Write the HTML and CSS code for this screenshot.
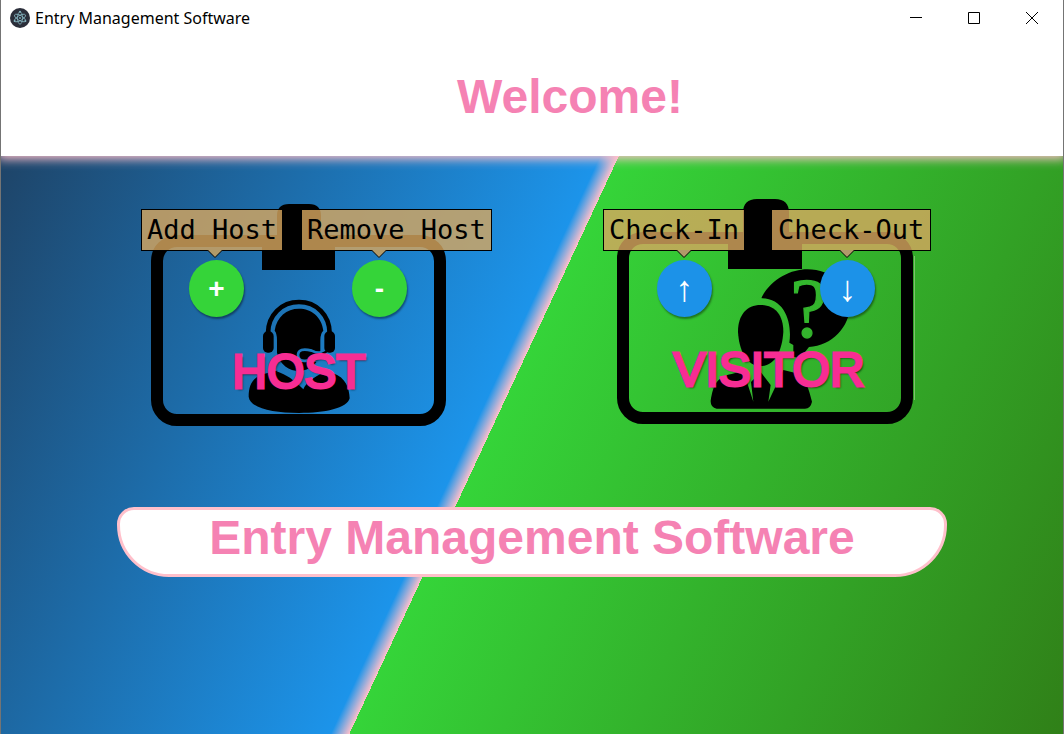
FILE: index.html
```html
<!DOCTYPE html>
<html lang="en">
<head>
<meta charset="utf-8">
<title>Entry Management Software</title>
<link rel="stylesheet" href="styles.css">
</head>
<body>
<div class="window">
  <div class="titlebar">
    <svg class="app-icon" viewBox="0 0 20 20" aria-hidden="true">
      <circle cx="10" cy="10" r="10" fill="#2b2e3a"/>
      <g fill="none" stroke="#84b4bf" stroke-width=".8">
        <ellipse cx="10" cy="10" rx="6.2" ry="2.5" transform="rotate(30 10 10)"/>
        <ellipse cx="10" cy="10" rx="6.2" ry="2.5" transform="rotate(-30 10 10)"/>
        <ellipse cx="10" cy="10" rx="6.2" ry="2.5" transform="rotate(90 10 10)"/>
      </g>
      <g fill="#84b4bf"><circle cx="10" cy="10" r=".9"/><circle cx="4.6" cy="13" r="1"/><circle cx="15.4" cy="13" r="1"/><circle cx="10" cy="3.8" r="1"/></g>
    </svg>
    <span class="app-name">Entry Management Software</span>
    <button class="win-btn" aria-label="Minimize"><svg viewBox="0 0 12 12"><path d="M0 5.5H12"/></svg></button>
    <button class="win-btn" aria-label="Maximize"><svg viewBox="0 0 12 12"><path d="M.5 .5H11.5V11.5H.5Z"/></svg></button>
    <button class="win-btn" aria-label="Close"><svg viewBox="0 0 12 12"><path d="M0 0L12 12M12 0L0 12"/></svg></button>
  </div>
  <header class="header"><h1 class="heading">Welcome!</h1></header>
  <main class="main">
    <div class="cards">
      <section class="card">
        <svg class="badge" viewBox="139 190 320 250" aria-hidden="true">
          <defs>
            <mask id="host-cut" maskUnits="userSpaceOnUse" x="0" y="0" width="960" height="450">
              <rect width="960" height="450" fill="#fff"/>
              <path d="M410 244C440 255 460 268 490 298C500 275 525 262 545 250L520 228L477 246L430 222Z" fill="#000"/>
            </mask>
            <mask id="host-head" maskUnits="userSpaceOnUse" x="0" y="0" width="960" height="450">
              <rect width="960" height="450" fill="#fff"/>
              <path d="M560 180Q540 195 515 182Q475 172 474 195Q475 216 500 212H550" fill="none" stroke="#000" stroke-width="8"/>
            </mask>
          </defs>
          <rect x="157" y="241" width="283" height="179" rx="20" fill="none" stroke="#000" stroke-width="12"/>
          <path d="M262 270V236H277V216Q277 204 289 204H309Q321 204 321 216V236H335V270Z"/>
          <g transform="translate(140 290) scale(.33333)">
            <path d="M384 130C384 75 425 36 477 36S569 75 569 130" fill="none" stroke="#000" stroke-width="14"/>
            <rect x="369" y="124" width="32" height="64" rx="14"/>
            <rect x="553" y="124" width="32" height="64" rx="14"/>
            <path d="M326 320C326 285 338 258 380 250L420 240H535L580 250C617 263 628 295 629 325C622 355 555 369 477 369S330 355 326 320Z" mask="url(#host-cut)"/>
            <path d="M411 188V150Q411 130 404 122C410 80 440 56 477 56S545 80 550 122Q541 130 541 150V190C535 222 505 243 477 243S418 224 411 188Z" mask="url(#host-head)"/>
            <path d="M560 184Q540 198 520 194" fill="none" stroke="#000" stroke-width="7"/>
          </g>
        </svg>
        <div class="content">
          <div class="actions">
            <button class="round green">+<span class="tip add">Add Host<svg class="arrow" viewBox="0 0 16 9"><path d="M.5 0L8 7.5L15.5 0"/></svg></span></button>
            <button class="round green">-<span class="tip remove">Remove Host<svg class="arrow" viewBox="0 0 16 9"><path d="M.5 0L8 7.5L15.5 0"/></svg></span></button>
          </div>
          <h2 class="card-title">HOST</h2>
        </div>
      </section>
      <section class="card">
        <svg class="badge" viewBox="605 190 320 250" aria-hidden="true">
          <defs>
            <mask id="question-cut" maskUnits="userSpaceOnUse" x="300" y="-100" width="500" height="450">
              <rect x="300" y="-100" width="500" height="450" fill="#fff"/>
              <text class="question" x="556" y="142">?</text>
            </mask>
          </defs>
          <rect x="623" y="238" width="284" height="180" rx="20" fill="none" stroke="#000" stroke-width="12"/>
          <path d="M914.5 256V400" stroke="#7fc06f"/>
          <path d="M728 269V233H743V213Q743 199 757 199H775Q789 199 789 213V233H802V269Z"/>
          <g transform="translate(605 290) scale(.33333)">
            <path d="M470 22C500 -35 560 -62 607 -62C680 -62 735 -10 735 45C735 110 680 168 612 171L585 205L565 200V165L553 158C562 100 540 25 470 25Z" mask="url(#question-cut)"/>
            <path d="M467 45C510 45 535 75 535 125C532 180 510 228 467 228S402 180 399 125C399 75 425 45 467 45Z"/>
            <path d="M317 332C325 285 335 260 380 252L415 242L445 335L438 276L467 246L497 285L490 335L535 240L575 250C602 262 612 300 621 335Q617 355 600 356H335Q316 353 317 332Z"/>
          </g>
        </svg>
        <div class="content visitor">
          <div class="actions">
            <button class="round blue">↑<span class="tip check-in">Check-In<svg class="arrow" viewBox="0 0 16 9"><path d="M.5 0L8 7.5L15.5 0"/></svg></span></button>
            <button class="round blue">↓<span class="tip check-out">Check-Out<svg class="arrow" viewBox="0 0 16 9"><path d="M.5 0L8 7.5L15.5 0"/></svg></span></button>
          </div>
          <h2 class="card-title">VISITOR</h2>
        </div>
      </section>
    </div>
    <div class="banner">Entry Management Software</div>
  </main>
</div>
</body>
</html>
```
FILE: styles.css
```css
* { box-sizing: border-box; }
body { margin: 0; font-family: "Liberation Sans", Arial, sans-serif; background: #fff; }
button { border: 0; padding: 0; font-family: inherit; background: none; }
h1, h2 { margin: 0; }

.window {
  display: flex;
  flex-direction: column;
  min-height: 100vh;
  border: solid #747474;
  border-width: 0 1px;
}
.titlebar {
  display: flex;
  align-items: center;
  height: 36px;
  padding: 0 2px 0 9px;
  background: #fff;
}
.app-icon { width: 20px; height: 20px; margin-right: 5px; }
.app-name { flex: 1; font: 16px/24px "Noto Sans", sans-serif; color: #000; }
.win-btn { display: flex; align-items: center; justify-content: center; width: 58px; height: 36px; }
.win-btn svg { width: 12px; height: 12px; fill: none; stroke: #000; stroke-width: 1; }

.header {
  position: relative;
  height: 120px;
  padding-left: 76px;
  text-align: center;
  background: #fff;
  box-shadow: 0 0 10px 3px pink;
  clip-path: inset(0 0 -20px);
}
.heading { font-size: 48px; line-height: 121px; color: #f582b3; }

.main {
  flex: 1;
  padding-top: 34px;
  background: linear-gradient(115deg, #1e4468 0%, #1c94ea 45%, pink 46.4%, #35d439 46.4%, #308018 100%);
}

.cards { display: flex; justify-content: center; gap: 146px; }
.card { display: grid; width: 320px; }
.badge, .content { grid-area: 1 / 1; }
.badge { width: 320px; height: 250px; }
.question { font-family: "Liberation Serif", serif; font-size: 252px; fill: #000; stroke: #000; stroke-width: 4px; }
.content { position: relative; padding: 70px 2px 0 0; text-align: center; }
.visitor { padding: 70px 0 0 2px; }
.actions { display: flex; justify-content: center; gap: 108px; }

.round {
  position: relative;
  width: 55px;
  height: 57px;
  border-radius: 50%;
  font-size: 28px;
  font-weight: bold;
  color: #fff;
  box-shadow: 1px 2px 2px rgba(0, 0, 0, .4);
}
.green { background: #35d439; }
.blue { background: #1c92e8; font-size: 36px; font-weight: normal; }

.tip {
  position: absolute;
  top: -51px;
  height: 42px;
  padding: 0 5px;
  border: 1px solid #000;
  background: rgba(214, 166, 95, .81);
  font: 27px/40px "DejaVu Sans Mono", monospace;
  color: #000;
  white-space: nowrap;
}
.add { left: -48px; }
.remove { left: -51px; }
.check-in { left: -54px; }
.check-out { left: -49px; padding: 0 6px; }
.arrow {
  position: absolute;
  top: 40px;
  width: 16px;
  height: 9px;
  fill: #b29a69;
  stroke: #000;
}
.add .arrow { left: 65px; }
.remove .arrow { left: 69px; }
.check-in .arrow { left: 72px; }
.check-out .arrow { left: 67px; }

.card-title {
  margin-top: 28px;
  padding-left: 2px;
  font-size: 48px;
  font-weight: normal;
  line-height: 54px;
  color: #f72d93;
  -webkit-text-stroke: 3px #f72d93;
  text-shadow: 2px 2px 2px rgba(0, 0, 0, .6);
}
.visitor .card-title { padding-left: 6px; line-height: 50px; }

.banner {
  margin: 67px 116px 0;
  padding-bottom: 8px;
  border: 3px solid pink;
  border-radius: 17px 17px 52px 52px;
  background: #fff;
  font-size: 48px;
  font-weight: bold;
  line-height: 56px;
  text-align: center;
  color: #f582b3;
}
```
